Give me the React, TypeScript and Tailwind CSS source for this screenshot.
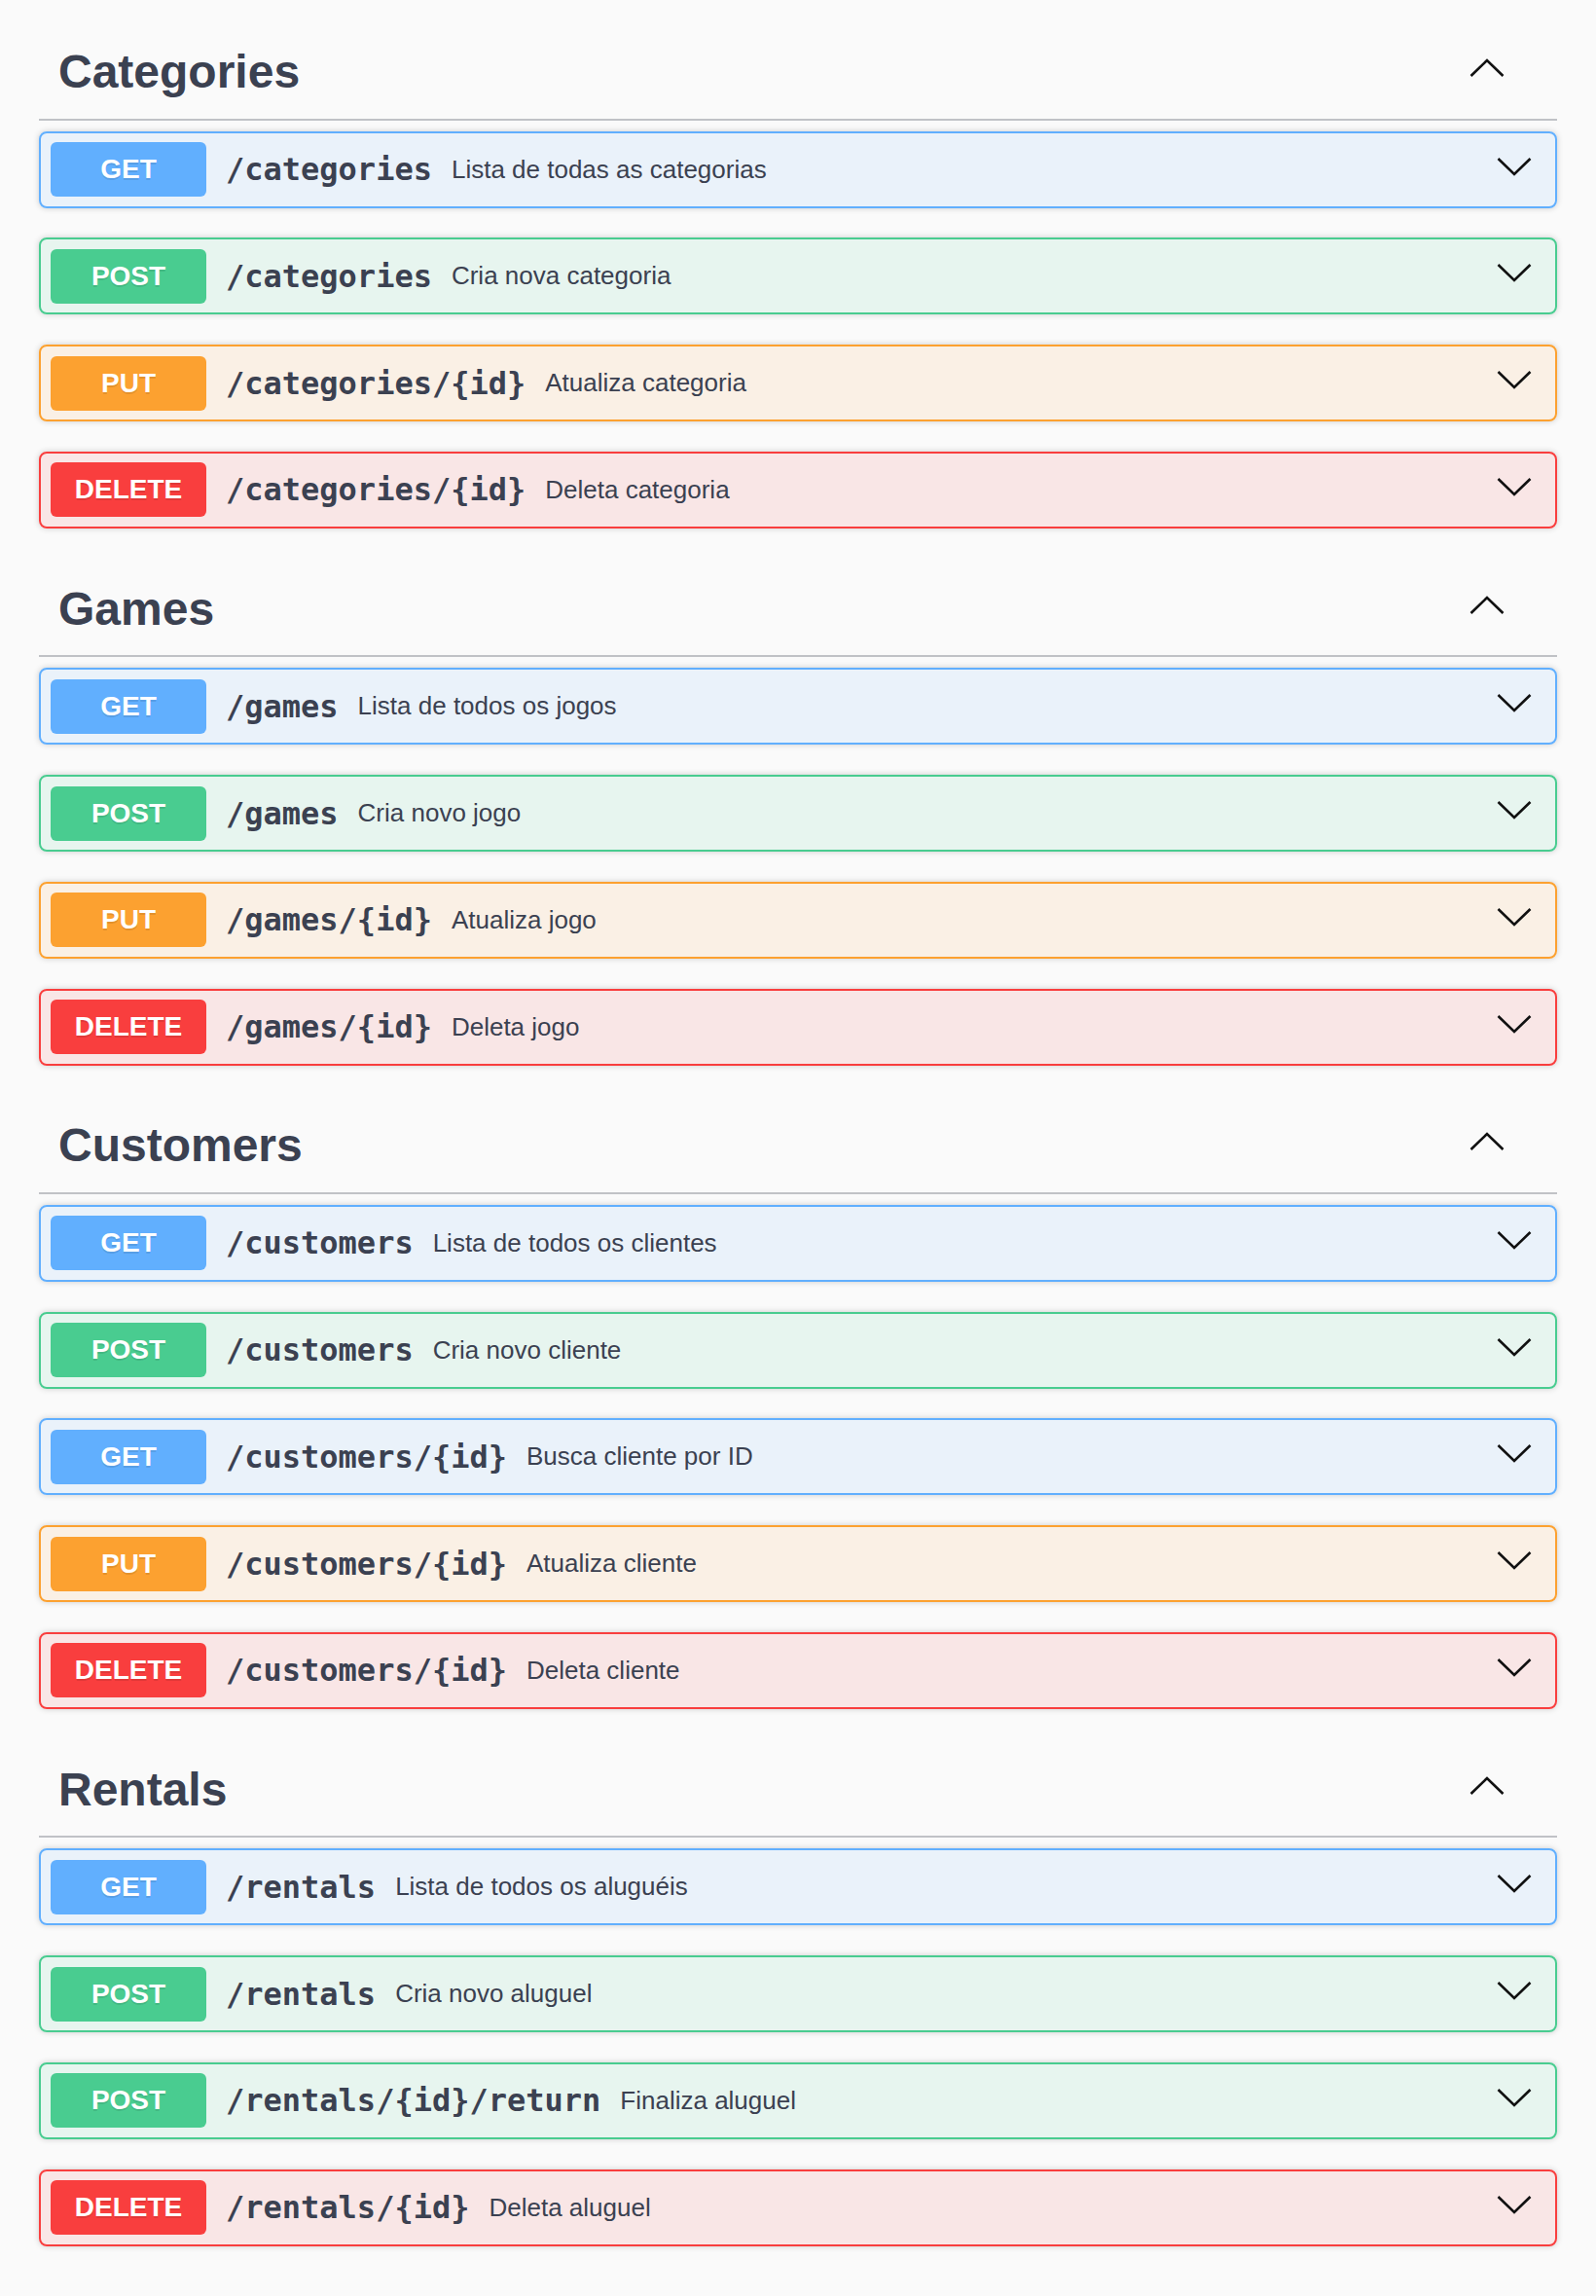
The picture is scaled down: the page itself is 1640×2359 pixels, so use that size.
import React from 'react';

type Method = 'GET' | 'POST' | 'PUT' | 'DELETE';

type Op = { method: Method; path: string; summary: string };

type Section = { name: string; ops: Op[] };

const sections: Section[] = [
    {
        name: 'Categories',
        ops: [
            { method: 'GET', path: '/categories', summary: 'Lista de todas as categorias' },
            { method: 'POST', path: '/categories', summary: 'Cria nova categoria' },
            { method: 'PUT', path: '/categories/{id}', summary: 'Atualiza categoria' },
            { method: 'DELETE', path: '/categories/{id}', summary: 'Deleta categoria' },
        ],
    },
    {
        name: 'Games',
        ops: [
            { method: 'GET', path: '/games', summary: 'Lista de todos os jogos' },
            { method: 'POST', path: '/games', summary: 'Cria novo jogo' },
            { method: 'PUT', path: '/games/{id}', summary: 'Atualiza jogo' },
            { method: 'DELETE', path: '/games/{id}', summary: 'Deleta jogo' },
        ],
    },
    {
        name: 'Customers',
        ops: [
            { method: 'GET', path: '/customers', summary: 'Lista de todos os clientes' },
            { method: 'POST', path: '/customers', summary: 'Cria novo cliente' },
            { method: 'GET', path: '/customers/{id}', summary: 'Busca cliente por ID' },
            { method: 'PUT', path: '/customers/{id}', summary: 'Atualiza cliente' },
            { method: 'DELETE', path: '/customers/{id}', summary: 'Deleta cliente' },
        ],
    },
    {
        name: 'Rentals',
        ops: [
            { method: 'GET', path: '/rentals', summary: 'Lista de todos os aluguéis' },
            { method: 'POST', path: '/rentals', summary: 'Cria novo aluguel' },
            { method: 'POST', path: '/rentals/{id}/return', summary: 'Finaliza aluguel' },
            { method: 'DELETE', path: '/rentals/{id}', summary: 'Deleta aluguel' },
        ],
    },
];

// block (border + tint) and badge colours per method
const styles: Record<Method, { block: string; badge: string }> = {
    GET: { block: 'border-[#61affe] bg-[#61affe]/10', badge: 'bg-[#61affe]' },
    POST: { block: 'border-[#49cc90] bg-[#49cc90]/10', badge: 'bg-[#49cc90]' },
    PUT: { block: 'border-[#fca130] bg-[#fca130]/10', badge: 'bg-[#fca130]' },
    DELETE: { block: 'border-[#f93e3e] bg-[#f93e3e]/10', badge: 'bg-[#f93e3e]' },
};

function Chevron({ up = false }: { up?: boolean }) {
    return (
        <svg width="36" height="20" viewBox="0 0 36 20" fill="none" aria-hidden="true">
            <polyline
                points={up ? '1.5,18 18,2 34.5,18' : '1.5,2 18,18 34.5,2'}
                stroke="#111"
                strokeWidth="2.6"
                strokeLinejoin="miter"
            />
        </svg>
    );
}

function OpBlock({ op }: { op: Op }) {
    const s = styles[op.method];
    return (
        <div className={`flex items-center h-[79px] border-2 rounded-[8px] px-[10px] shadow-[0_0_6px_rgba(0,0,0,0.19)] ${s.block}`}>
            <span className={`flex items-center justify-center w-[160px] h-[56px] rounded-[6px] text-white text-[28px] font-bold font-['Liberation_Sans',Arial,sans-serif] [text-shadow:0_2px_0_rgba(0,0,0,0.1)] ${s.badge}`}>
                {op.method}
            </span>
            <span className="px-[20px] text-[32px] font-bold text-[#3b4151] font-['DejaVu_Sans_Mono',monospace]">
                {op.path}
            </span>
            <span className="flex-1 text-[26px] text-[#3b4151] font-['Liberation_Sans',Arial,sans-serif]">
                {op.summary}
            </span>
            <span className="self-start mt-[24px] mr-[14px]">
                <Chevron />
            </span>
        </div>
    );
}

function TagSection({ section }: { section: Section }) {
    return (
        <section className="mb-[30.75px]">
            <div className="flex items-start justify-between h-[101.65px] pt-[28px] pl-[20px] border-b-2 border-[#3b4151]/30">
                <h3 className="text-[48px] leading-[48px] font-bold text-[#3b4151] font-['Liberation_Sans',Arial,sans-serif]">
                    {section.name}
                </h3>
                <span className="mt-[10px] mr-[54px]">
                    <Chevron up />
                </span>
            </div>
            <div className="mt-[11px] flex flex-col gap-[30.75px]">
                {section.ops.map((op, i) => (
                    <OpBlock key={i} op={op} />
                ))}
            </div>
        </section>
    );
}

export default function App() {
    return (
        <div className="min-h-screen bg-[#fafafa] px-[40px] pt-[22px] pb-[20px]">
            {sections.map((s) => (
                <TagSection key={s.name} section={s} />
            ))}
        </div>
    );
}
